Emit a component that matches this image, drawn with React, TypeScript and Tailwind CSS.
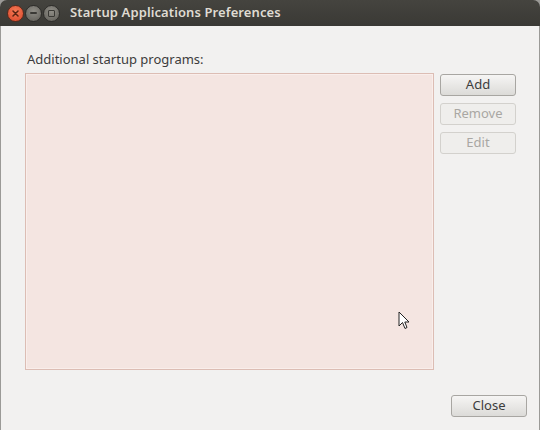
import type { ReactNode } from 'react';

const FONT = { fontFamily: '"Noto Sans", "DejaVu Sans", sans-serif' };

function TitleButton({ kind }: { kind: 'close' | 'min' | 'max' }) {
  if (kind === 'close') {
    return (
      <span className="flex size-[17px] items-center justify-center rounded-full border border-[#5a2a1c] bg-[radial-gradient(circle_at_50%_35%,#f57a55,#d9462a)]">
        <svg width="7" height="7" viewBox="0 0 7 7">
          <path d="M1 1 L6 6 M6 1 L1 6" stroke="#5a2412" strokeWidth="1.5" strokeLinecap="round" />
        </svg>
      </span>
    );
  }
  return (
    <span className="flex size-[17px] items-center justify-center rounded-full border border-[#2e2d2a] bg-[radial-gradient(circle_at_50%_35%,#8f8d86,#5f5d57)]">
      {kind === 'min' ? (
        <span className="h-[2px] w-[7px] rounded-sm bg-[#3a3935]" />
      ) : (
        <span className="size-[7px] rounded-[1px] border-[1.5px] border-[#3a3935]" />
      )}
    </span>
  );
}

function Button({ children, disabled }: { children: ReactNode; disabled?: boolean }) {
  return (
    <button
      className={`flex h-[22px] w-[76px] items-center justify-center rounded-[3px] border text-[13px] ${
        disabled
          ? 'border-[#d3d1cd] bg-[#efeeec] text-[#a9a7a3]'
          : 'border-[#a8a6a2] bg-linear-to-b from-[#f6f5f4] to-[#dcdbd8] text-[#3c3c3c]'
      }`}
    >
      {children}
    </button>
  );
}

export default function App() {
  return (
    <div className="flex h-[430px] w-[540px] flex-col overflow-hidden bg-[#9b9a97]" style={FONT}>
      {/* title bar */}
      <div className="flex h-[26px] shrink-0 items-center gap-[1px] rounded-t-[7px] bg-linear-to-b from-[#45443f] to-[#3a3935] pl-[7px]">
        <TitleButton kind="close" />
        <TitleButton kind="min" />
        <TitleButton kind="max" />
        <span className="ml-[9px] text-[13px] font-semibold tracking-[0.1px] text-[#dfdbd2]">
          Startup Applications Preferences
        </span>
      </div>

      {/* body */}
      <div className="mx-[1px] flex flex-1 flex-col bg-[#f2f1f0] pl-[24px] pr-[12px] pt-[25px] pb-[13px]">
        <div className="pl-[2px] text-[13px] leading-[16px] text-[#3c3c3c]">Additional startup programs:</div>
        <div className="mt-[6px] flex gap-[6px]">
          <div className="relative h-[297px] w-[409px] border border-[#dcbdb4] bg-[#f4e5e1] shadow-[inset_0_0_0_1px_#f9eeeb]">
            <svg className="absolute left-[372px] top-[237px]" width="12" height="19" viewBox="0 0 12 19">
              <path d="M1 1 L1 15 L4.5 11.5 L7 17.5 L9 16.5 L6.8 11 L11 11 Z" fill="#ffffff" stroke="#222" strokeWidth="1" strokeLinejoin="round" />
            </svg>
          </div>
          <div className="flex flex-col gap-[7px] pt-[1px]">
            <Button>Add</Button>
            <Button disabled>Remove</Button>
            <Button disabled>Edit</Button>
          </div>
        </div>
        <div className="mt-auto flex justify-end">
          <Button>Close</Button>
        </div>
      </div>
    </div>
  );
}
